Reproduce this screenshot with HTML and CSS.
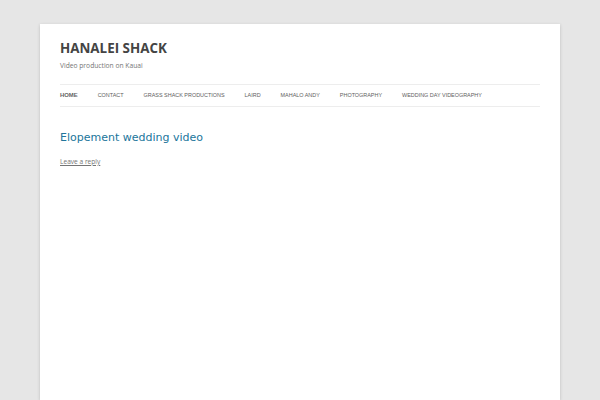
FILE: index.html
```html
<!DOCTYPE html>
<html lang="en">
<head>
<meta charset="utf-8">
<title>Hanalei Shack</title>
<link rel="stylesheet" href="styles.css">
</head>
<body>
<div class="site">
  <header class="site-header">
    <h1 class="site-title">HANALEI SHACK</h1>
    <h2 class="site-description">Video production on Kauai</h2>
    <nav class="main-navigation">
      <ul class="nav-menu">
        <li class="current"><a href="#">Home</a></li>
        <li><a href="#">Contact</a></li>
        <li><a href="#">Grass Shack Productions</a></li>
        <li><a href="#">Laird</a></li>
        <li><a href="#">Mahalo Andy</a></li>
        <li><a href="#">Photography</a></li>
        <li><a href="#">Wedding Day Videography</a></li>
      </ul>
    </nav>
  </header>
  <main class="site-content">
    <article class="post">
      <h1 class="entry-title"><a href="#">Elopement wedding video</a></h1>
      <div class="comments-link"><a href="#">Leave a reply</a></div>
    </article>
  </main>
</div>
</body>
</html>
```
FILE: styles.css
```css
html, body {
  margin: 0;
  padding: 0;
}
body {
  background: #e6e6e6;
  font-family: "Open Sans", "Liberation Sans", Arial, sans-serif;
  color: #444;
  padding-top: 24px;
}
.site {
  width: 480px;
  margin: 0 auto;
  padding: 0 20px;
  background: #fff;
  min-height: 376px;
  box-shadow: 0 1px 3px rgba(100, 100, 100, 0.3);
}
.site-header {
  padding: 12px 0 0;
}
.site-title {
  margin: 0;
  font-size: 13.4px;
  line-height: 24px;
  font-weight: 700;
  color: #444;
}
.site-description {
  margin: 0;
  font-size: 6.7px;
  line-height: 12px;
  font-weight: 400;
  color: #757575;
}
.main-navigation {
  margin-top: 12px;
}
.nav-menu {
  display: flex;
  gap: 20px;
  margin: 0;
  padding: 0;
  list-style: none;
  border-top: 1px solid #ededed;
  border-bottom: 1px solid #ededed;
}
.nav-menu a {
  display: block;
  font-family: "Liberation Sans", Arial, sans-serif;
  font-size: 5.45px;
  line-height: 21px;
  color: #5e5e5e;
  text-decoration: none;
  text-transform: uppercase;
  white-space: nowrap;
}
.nav-menu .current a {
  font-size: 5.9px;
  font-weight: 700;
  color: #636363;
}
.site-content {
  padding-top: 25px;
}
.entry-title {
  margin: 0;
  font-family: "DejaVu Sans", sans-serif;
  font-size: 11px;
  line-height: 12px;
  font-weight: 400;
}
.entry-title a {
  color: #21759b;
  text-decoration: none;
}
.comments-link {
  margin-top: 12px;
  font-size: 6.6px;
  line-height: 12px;
}
.comments-link a {
  color: #757575;
  text-decoration: underline;
}
```
